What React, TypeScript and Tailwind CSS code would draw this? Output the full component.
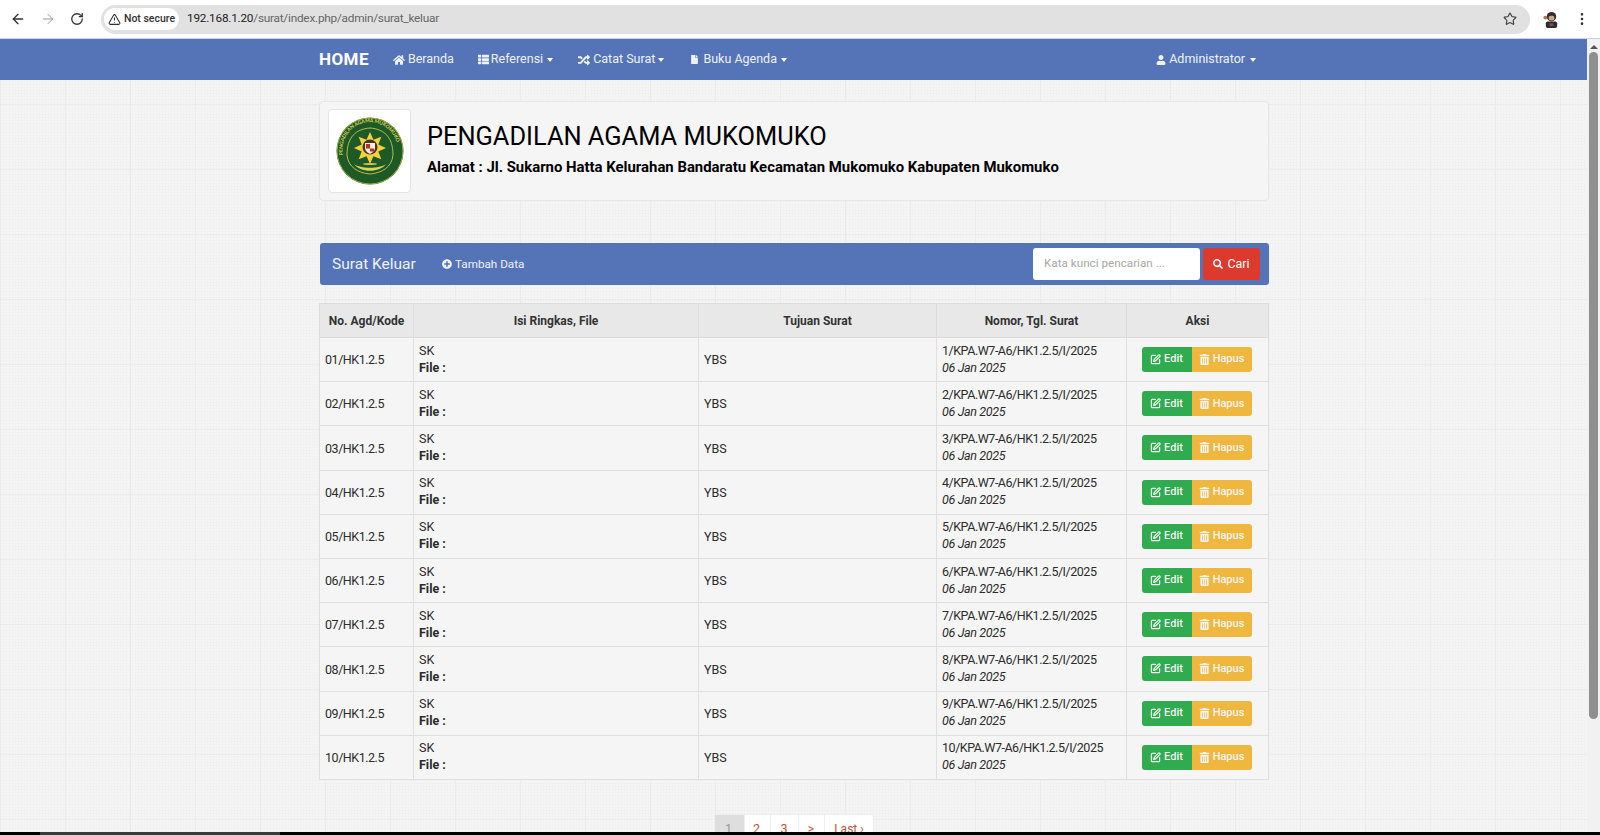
import { FaHome, FaThList, FaRandom, FaFile, FaUser, FaPlusCircle, FaSearch, FaTrashAlt } from "react-icons/fa";
import { ArrowLeft, ArrowRight, RotateCw, TriangleAlert, Star, EllipsisVertical, SquarePen } from "lucide-react";

const rows = ["01", "02", "03", "04", "05", "06", "07", "08", "09", "10"];

function Caret() {
  return <span className="inline-block w-0 h-0 align-middle border-x-[3.5px] border-x-transparent border-t-[4px] border-t-white" />;
}

// eight pointed star of the badge
const star = Array.from({ length: 16 }, (_, i) => {
  const r = i % 2 === 0 ? 16 : 9;
  const a = (Math.PI * i) / 8 - Math.PI / 2;
  return `${34 + r * Math.cos(a)},${31 + r * Math.sin(a)}`;
}).join(" ");

function Logo() {
  return (
    <svg viewBox="0 0 68 68" className="w-[68px] h-[68px]">
      <defs>
        <path id="badge-top" d="M7 38 A27.5 27.5 0 1 1 61 38" />
      </defs>
      <circle cx="34" cy="34" r="33.5" fill="#1d5a26" />
      <circle cx="34" cy="34" r="33" fill="none" stroke="#c9c04a" strokeWidth="0.8" />
      <text fontSize="5" fontWeight="700" fill="#dcd35a" fontFamily="Lato, sans-serif" textLength="84">
        <textPath href="#badge-top">PENGADILAN AGAMA MUKOMUKO</textPath>
      </text>
      <path d="M11 38 C11 20 20 12 34 11 C48 12 57 20 57 38 C56 50 46 56 34 57 C22 56 12 50 11 38 Z" fill="none" stroke="#dcd35a" strokeWidth="0.8" />
      <polygon points={star} fill="#f4d13d" />
      <circle cx="34" cy="30" r="7.5" fill="#4a3320" />
      <path d="M29 26 H39 V31 C39 34 36 36 34 37 C32 36 29 34 29 31 Z" fill="#f3efe2" />
      <rect x="30" y="27" width="4" height="4.5" fill="#c02a25" />
      <rect x="34" y="31.5" width="4" height="3" fill="#c02a25" />
      <path d="M18 47 C24 56 44 56 50 47 C44 52 24 52 18 47 Z" fill="#dcd35a" />
      <ellipse cx="34" cy="47" rx="7" ry="1" fill="#cfc850" />
    </svg>
  );
}

function Avatar() {
  return (
    <svg viewBox="0 0 18 18" className="w-[17px] h-[17px]">
      <rect x="3" y="11" width="12" height="7" rx="2" fill="#2c2a33" />
      <circle cx="9" cy="6" r="5" fill="#3a2a26" />
      <rect x="6" y="5" width="6" height="5" rx="2" fill="#c9a58e" />
      <circle cx="2.5" cy="7" r="2" fill="#a8764f" />
      <rect x="7" y="13" width="4" height="3" fill="#8c4a3a" />
    </svg>
  );
}

export default function App() {
  return (
    <div className="h-[835px] w-full overflow-hidden flex flex-col bg-black font-['Roboto',sans-serif]">
      {/* browser bar */}
      <div className="h-[39px] shrink-0 bg-white flex items-center text-[#444] border-b border-[#c8d2e6]">
        <div className="w-[101px] flex items-center shrink-0 pl-[10px] gap-[14px]">
          <ArrowLeft size={16} strokeWidth={2} className="text-[#333]" />
          <ArrowRight size={16} strokeWidth={1.5} className="text-[#999]" />
          <RotateCw size={14} strokeWidth={2.2} className="text-[#333]" />
        </div>
        <div className="w-[1429px] h-[29px] rounded-full bg-[#e1e1e1] flex items-center pl-[3px] pr-[13px]">
          <div className="h-[22px] w-[75px] rounded-full bg-white flex items-center justify-center gap-[3px] text-[10.5px] font-medium text-[#333]">
            <TriangleAlert size={13} />
            <span>Not secure</span>
          </div>
          <div className="ml-[8px] text-[11.8px] tracking-[-0.23px] text-[#666]">
            <span className="text-[#222]">192.168.1.20</span>/surat/index.php/admin/surat_keluar
          </div>
          <Star size={14} className="ml-auto text-[#444]" />
        </div>
        <div className="flex-1 flex items-center pl-[13px] gap-[14px]">
          <Avatar />
          <EllipsisVertical size={16} className="text-[#333]" />
        </div>
      </div>

      <div className="flex-1 min-h-0 flex">
        <div className="flex-1 min-w-0 overflow-hidden text-[#2b2b2b] text-[12.5px] bg-[#f5f5f5] bg-[linear-gradient(#ebebeb_1px,transparent_1px),linear-gradient(90deg,#ebebeb_1px,transparent_1px),linear-gradient(#f1f1f1_1px,transparent_1px),linear-gradient(90deg,#f1f1f1_1px,transparent_1px)] bg-[size:65px_65px,65px_65px,3px_3px,3px_3px]">
          {/* navbar */}
          <nav className="h-[41px] bg-[#5574b8] text-[#eef1f8]">
            <div className="w-[950px] ml-[319px] h-full flex items-center">
              <span className="text-[17px] font-bold text-white tracking-wide mr-[24px]">HOME</span>
              <span className="flex items-center gap-[3px] mr-[24px]"><FaHome size={12} />Beranda</span>
              <span className="flex items-center gap-[2px] mr-[25px]"><FaThList size={11} />Referensi<span className="ml-[2px] flex"><Caret /></span></span>
              <span className="flex items-center gap-[3px] mr-[26px]"><FaRandom size={12} />Catat Surat<Caret /></span>
              <span className="flex items-center gap-[4px]"><FaFile size={9} />Buku Agenda<Caret /></span>
              <span className="flex items-center gap-[3px] ml-auto mr-[13px]"><FaUser size={10} />Administrator<span className="ml-[2px] flex"><Caret /></span></span>
            </div>
          </nav>

          <div className="w-[950px] ml-[319px]">
            {/* heading */}
            <div className="mt-[21px] h-[100px] border border-[#e6e6e6] rounded bg-[#f5f5f5] flex items-center pl-[8px]">
              <div className="w-[83px] h-[84px] rounded border border-[#e4e4e4] bg-white flex items-center justify-center">
                <Logo />
              </div>
              <div className="ml-[16px] text-black -mt-[5px]">
                <h1 className="text-[25.4px] leading-[34px]">PENGADILAN AGAMA MUKOMUKO</h1>
                <p className="text-[14.9px] font-bold mt-[3px]">Alamat : Jl. Sukarno Hatta Kelurahan Bandaratu Kecamatan Mukomuko Kabupaten Mukomuko</p>
              </div>
            </div>

            {/* panel bar */}
            <div className="mt-[42px] ml-[1px] h-[42px] rounded-[3px] bg-[#5574b8] text-[#eef1f8] flex items-center pl-[12px] pr-[9px]">
              <span className="text-[15.5px] w-[110px] pt-[1px]">Surat Keluar</span>
              <span className="flex items-center gap-[3px] text-[11.7px] pt-[1px]"><FaPlusCircle size={10} />Tambah Data</span>
              <div className="ml-auto w-[167px] h-[32px] rounded-[3px] bg-white text-[#a8a8a8] text-[11.7px] flex items-center pl-[11px]">Kata kunci pencarian ...</div>
              <div className="ml-[3px] w-[57px] h-[32px] rounded-[3px] bg-[#dd3a2e] text-white flex items-center justify-center gap-[4px]"><FaSearch size={10} />Cari</div>
            </div>

            {/* table */}
            <table className="mt-[18px] w-[950px] table-fixed border-collapse border border-[#e4e4e4]">
              <thead>
                <tr className="h-[34px] bg-[#e8e8e8] font-bold text-[12px] text-[#333] text-center">
                  <th className="w-[94px] border border-[#dcdcdc]">No. Agd/Kode</th>
                  <th className="w-[285px] border border-[#dcdcdc]">Isi Ringkas, File</th>
                  <th className="w-[238px] border border-[#dcdcdc]">Tujuan Surat</th>
                  <th className="w-[190px] border border-[#dcdcdc]">Nomor, Tgl. Surat</th>
                  <th className="border border-[#dcdcdc]">Aksi</th>
                </tr>
              </thead>
              <tbody>
                {rows.map((no, i) => (
                  <tr key={no} className="h-[44.2px] bg-[#f5f5f5]">
                    <td className="border border-[#dfdfdf] px-[5px] pt-[2px] tracking-[-0.47px]">{no}/HK1.2.5</td>
                    <td className="border border-[#dfdfdf] px-[5px] pb-[2px] leading-[17px]">
                      <div>SK</div>
                      <div className="font-bold">File :</div>
                    </td>
                    <td className="border border-[#dfdfdf] px-[5px] pt-[2px]">YBS</td>
                    <td className="border border-[#dfdfdf] px-[5px] pb-[2px] leading-[17px]">
                      <div className="tracking-[-0.47px]">{i + 1}/KPA.W7-A6/HK1.2.5/I/2025</div>
                      <div className="italic tracking-[-0.35px]">06 Jan 2025</div>
                    </td>
                    <td className="border border-[#dfdfdf]">
                      <div className="flex justify-center pr-[2px] text-[11px] font-medium text-[#f4f4f4]">
                        <span className="w-[50px] h-[25px] rounded-l-[3px] bg-[#30ab4f] flex items-center justify-center gap-[3px]"><SquarePen size={11} strokeWidth={2.6} />Edit</span>
                        <span className="w-[60px] h-[25px] rounded-r-[3px] bg-[#efb73e] flex items-center justify-center gap-[3px]"><FaTrashAlt size={11} />Hapus</span>
                      </div>
                    </td>
                  </tr>
                ))}
              </tbody>
            </table>

            {/* pagination */}
            <div className="mt-[34px] flex justify-center">
              <div className="flex h-[32px] text-[#b9553a] border border-[#eeeeee] rounded-[3px] bg-white">
                <span className="w-[29px] bg-[#dedede] text-[#999] text-center pt-[5px] pr-[2px]">1</span>
                <span className="w-[26px] border-l border-[#eeeeee] text-center pt-[5px] pr-[2px]">2</span>
                <span className="w-[28px] border-l border-[#eeeeee] text-center pt-[5px] pr-[1px]">3</span>
                <span className="w-[26px] border-l border-[#eeeeee] text-center pt-[5px] pr-[1px]">&gt;</span>
                <span className="w-[49px] border-l border-[#eeeeee] text-center pt-[5px] text-[12px]">Last ›</span>
              </div>
            </div>
          </div>
        </div>

        {/* scrollbar */}
        <div className="w-[13px] shrink-0 bg-[#f1f1f1] flex flex-col items-center pt-[6px]">
          <span className="w-0 h-0 border-x-[4px] border-x-transparent border-b-[4px] border-b-[#555]" />
          <div className="mt-[3px] w-[9px] h-[667px] rounded-full bg-[#8f8f8f]" />
        </div>
      </div>

      {/* taskbar edge */}
      <div className="h-[3px] shrink-0 flex bg-black">
        <div className="ml-[40px] w-[240px] bg-[#3a3a3a]" />
      </div>
    </div>
  );
}
